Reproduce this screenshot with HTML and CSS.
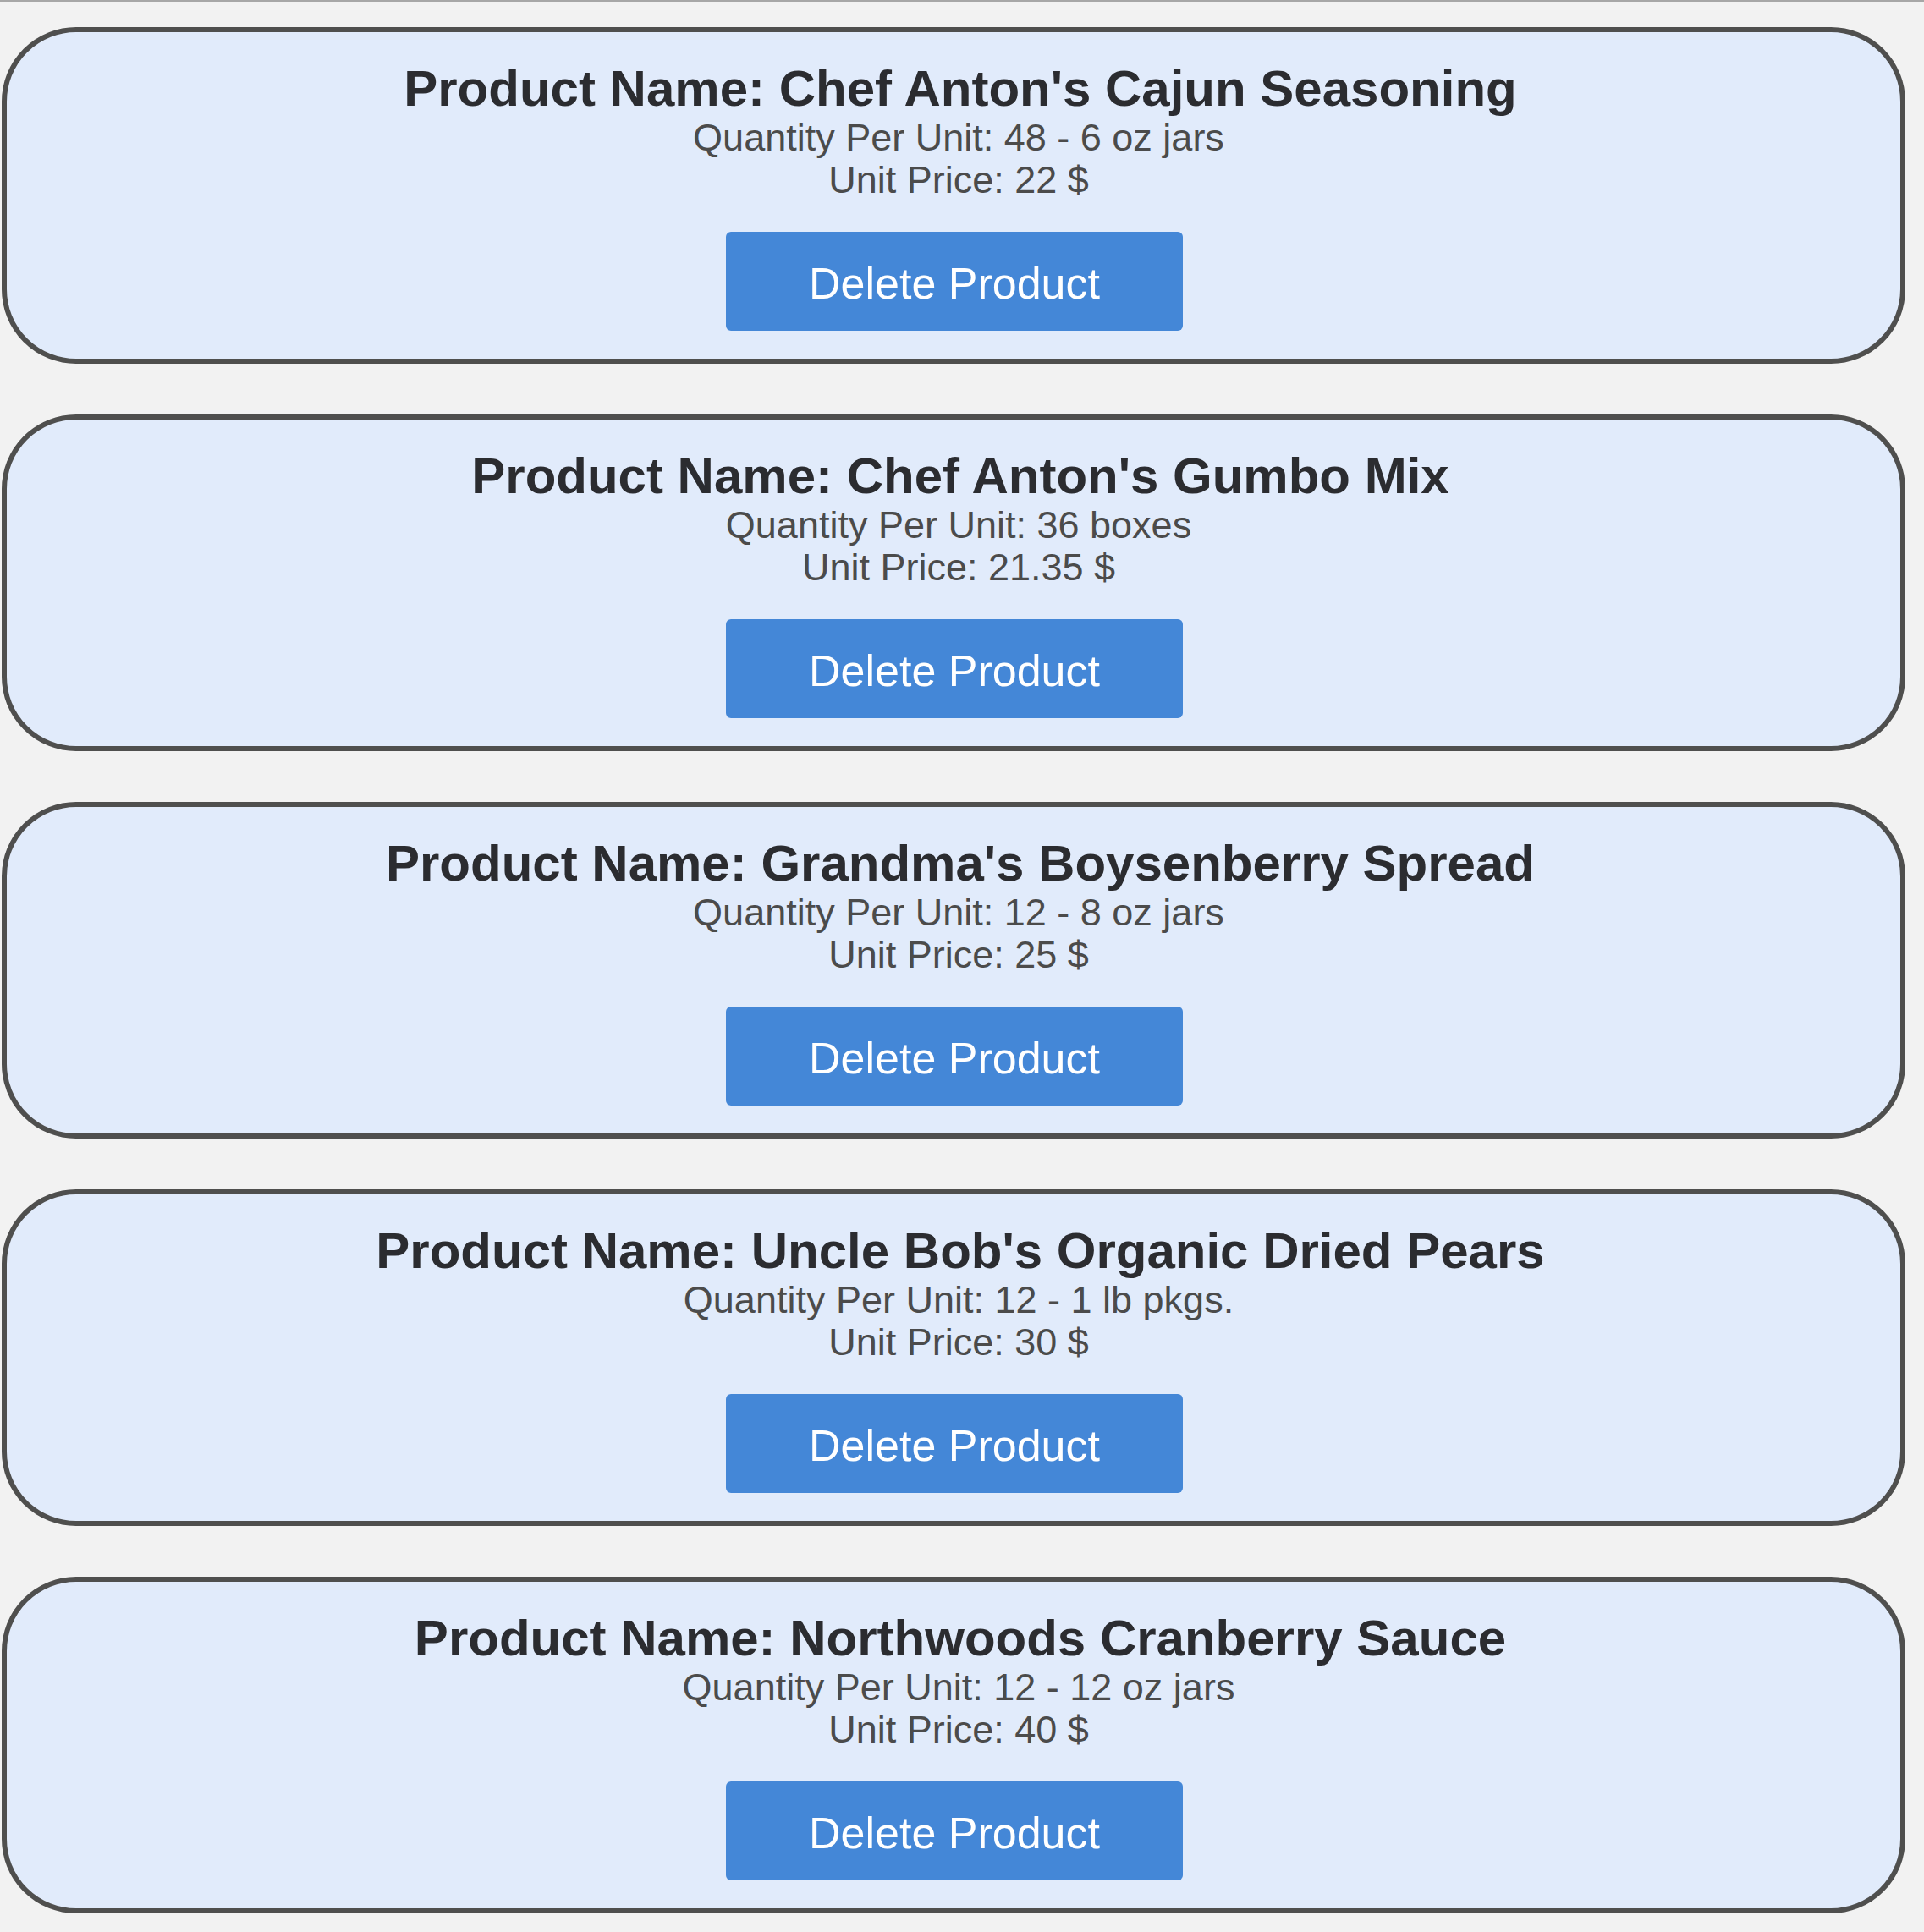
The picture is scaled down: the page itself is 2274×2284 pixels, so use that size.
FILE: index.html
```html
<!DOCTYPE html>
<html lang="en">
<head>
<meta charset="utf-8">
<title>Products</title>
<link rel="stylesheet" href="styles.css">
</head>
<body>
<main class="page">
  <section class="card">
    <h2 class="card-title">Product Name: Chef Anton's Cajun Seasoning</h2>
    <p class="card-line">Quantity Per Unit: 48 - 6 oz jars</p>
    <p class="card-line">Unit Price: 22 $</p>
    <button class="btn-delete" type="button">Delete Product</button>
  </section>
  <section class="card">
    <h2 class="card-title">Product Name: Chef Anton's Gumbo Mix</h2>
    <p class="card-line">Quantity Per Unit: 36 boxes</p>
    <p class="card-line">Unit Price: 21.35 $</p>
    <button class="btn-delete" type="button">Delete Product</button>
  </section>
  <section class="card">
    <h2 class="card-title">Product Name: Grandma's Boysenberry Spread</h2>
    <p class="card-line">Quantity Per Unit: 12 - 8 oz jars</p>
    <p class="card-line">Unit Price: 25 $</p>
    <button class="btn-delete" type="button">Delete Product</button>
  </section>
  <section class="card">
    <h2 class="card-title">Product Name: Uncle Bob's Organic Dried Pears</h2>
    <p class="card-line">Quantity Per Unit: 12 - 1 lb pkgs.</p>
    <p class="card-line">Unit Price: 30 $</p>
    <button class="btn-delete" type="button">Delete Product</button>
  </section>
  <section class="card">
    <h2 class="card-title">Product Name: Northwoods Cranberry Sauce</h2>
    <p class="card-line">Quantity Per Unit: 12 - 12 oz jars</p>
    <p class="card-line">Unit Price: 40 $</p>
    <button class="btn-delete" type="button">Delete Product</button>
  </section>
</main>
</body>
</html>
```

FILE: styles.css
```css
html, body {
  margin: 0;
  padding: 0;
  background: #f2f2f2;
}

body {
  font-family: "Liberation Sans", Arial, Helvetica, sans-serif;
}

.page {
  border-top: 2px solid #a7a7a7;
  padding: 30px 22px 22px 2px;
  display: flex;
  flex-direction: column;
  gap: 60px;
}

.card {
  box-sizing: border-box;
  height: 398px;
  background: #e1ebfb;
  border: 6px solid #4f4f4e;
  border-radius: 88px;
  padding: 33px 20px 0;
  display: flex;
  flex-direction: column;
  align-items: center;
  text-align: center;
}

.card-title {
  margin: 0;
  padding-left: 16px;
  font-size: 60px;
  line-height: 67px;
  font-weight: 700;
  color: #2b2c30;
}

.card-line {
  margin: 0;
  padding-left: 12px;
  font-size: 45px;
  line-height: 50px;
  color: #4b4b4b;
}

.btn-delete {
  margin-top: 36px;
  margin-left: 2px;
  box-sizing: border-box;
  width: 540px;
  height: 117px;
  padding: 6px 0 0;
  border: none;
  border-radius: 6px;
  background: #4487d7;
  color: #ffffff;
  font-family: "Liberation Sans", Arial, Helvetica, sans-serif;
  font-size: 52px;
  line-height: 111px;
}
```
